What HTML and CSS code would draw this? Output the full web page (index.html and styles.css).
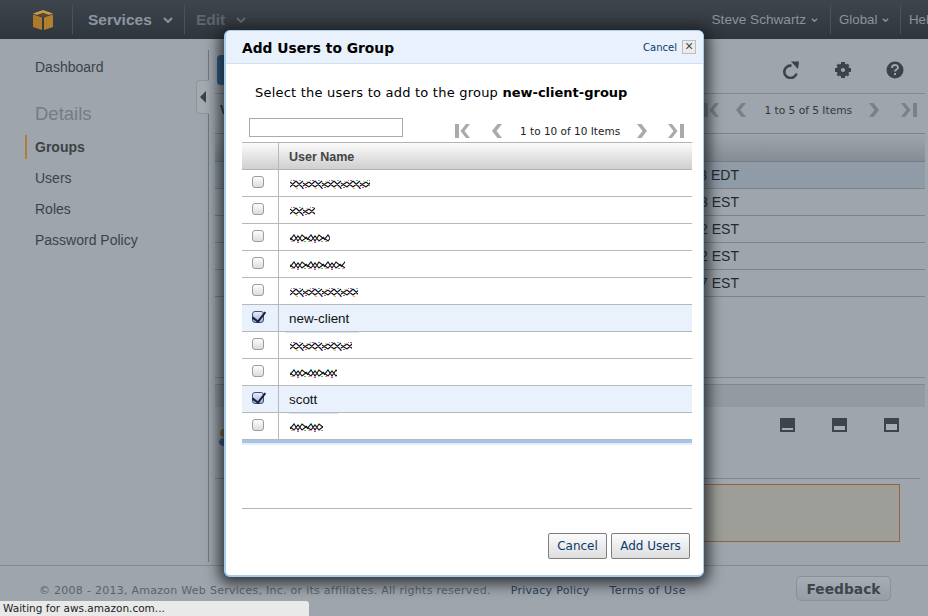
FILE: index.html
```html
<!DOCTYPE html>
<html lang="en">
<head>
<meta charset="utf-8">
<title>Add Users to Group</title>
<link rel="stylesheet" href="styles.css">
</head>
<body>
<svg class="defs" width="0" height="0" aria-hidden="true">
  <defs>
    <pattern id="scramble-a" width="19" height="10" patternUnits="userSpaceOnUse">
      <path d="M0 3l6 5M0 8l6-6M6 2l7 7M6 8l7-6M13 4l6 4M13 7l6-4" fill="none" stroke="#14141c" stroke-width="1.150"/>
      <rect x="3" y="1" width="2" height="1" fill="#e23fb0"/>
      <rect x="9" y="1" width="2" height="1" fill="#35c4e8"/>
      <rect x="6" y="9" width="2" height="1" fill="#e8c832"/>
      <rect x="15" y="8" width="2" height="1" fill="#e8503a"/>
      <rect x="1" y="1" width="1" height="1" fill="#4bc45a"/>
      <rect x="12" y="9" width="2" height="1" fill="#3c6ae0"/>
      <rect x="16" y="2" width="2" height="1" fill="#e8c890"/>
    </pattern>
    <pattern id="scramble-b" width="17" height="10" patternUnits="userSpaceOnUse">
      <path d="M0 5l4 3 4-5 4 5 5-4M0 7l4-5 4 6 4-6 5 4" fill="none" stroke="#14141c" stroke-width="1.150"/>
      <rect x="3" y="1" width="2" height="1" fill="#35c4e8"/>
      <rect x="7" y="9" width="2" height="1" fill="#e23fb0"/>
      <rect x="11" y="1" width="2" height="1" fill="#e8c832"/>
      <rect x="14" y="8" width="2" height="1" fill="#4bc45a"/>
      <rect x="1" y="8" width="2" height="1" fill="#e8a060"/>
    </pattern>
  </defs>
  <symbol id="dn" viewBox="0 0 10 6"><path d="M1 1l4 4 4-4" fill="none" stroke="currentColor" stroke-width="2"/></symbol>
  <symbol id="first" viewBox="0 0 16 14"><path d="M0 0h4v14H0zM11 0h4L9.500 7l5.500 7h-4L5.500 7z" fill="currentColor"/></symbol>
  <symbol id="prev" viewBox="0 0 11 14"><path d="M6.500 0H11L5.500 7l5.500 7H6.500L1 7z" fill="currentColor"/></symbol>
  <symbol id="next" viewBox="0 0 11 14"><path d="M0 0h4.500L10 7l-5.500 7H0l5.500-7z" fill="currentColor"/></symbol>
  <symbol id="last" viewBox="0 0 16 14"><path d="M0 0h4l5.500 7L4 14H0l5.500-7zM12 0h4v14h-4z" fill="currentColor"/></symbol>
</svg>
<div class="page">
  <header class="topbar">
    <div class="logo-cell">
      <svg class="cube" viewBox="0 0 20 20" width="20" height="20"><path d="M10 0l10 3.500-4 1.500-6-2-6 2-4-1.500z" fill="#c79a4e"/><path d="M4 5l6 2 6-2-6-2z" fill="#5d4a2b"/><path d="M0 4.500l9 3V20l-9-3z" fill="#ac7a2a"/><path d="M20 4.500l-9 3V20l9-3z" fill="#b27f2d"/></svg>
    </div>
    <div class="nav-cell nav-services"><span class="nav-main">Services</span><svg class="dn" width="10" height="6"><use href="#dn"/></svg></div>
    <div class="nav-cell nav-edit"><span class="nav-main nav-dim">Edit</span><svg class="dn dn-dim" width="10" height="6"><use href="#dn"/></svg></div>
    <div class="nav-right">
      <div class="user-cell cell-user"><span>Steve Schwartz</span><svg class="dn dn-small" width="7" height="4"><use href="#dn"/></svg></div>
      <div class="user-cell cell-global"><span>Global</span><svg class="dn dn-small" width="7" height="4"><use href="#dn"/></svg></div>
      <div class="user-cell cell-help"><span>Help</span></div>
    </div>
  </header>

  <div class="main">
    <nav class="sidebar">
      <a class="side-link">Dashboard</a>
      <div class="side-head">Details</div>
      <a class="side-link side-active">Groups</a>
      <a class="side-link">Users</a>
      <a class="side-link">Roles</a>
      <a class="side-link">Password Policy</a>
      <div class="collapse-tab"><span class="collapse-arrow"></span></div>
    </nav>
    <section class="content">
      <div class="toolbar">
        <span class="blue-btn"></span>
        <div class="tool-icons">
          <svg width="18" height="18" viewBox="0 0 18 18"><path d="M14.500 12.500A6.200 6.200 0 1 1 9.500 4.700" fill="none" stroke="#3c4249" stroke-width="2.600"/><path d="M9 0.500l8 0-1 7.500z" fill="#3c4249"/></svg>
          <svg width="16" height="16" viewBox="0 0 16 16"><circle cx="8" cy="8" r="4.300" fill="none" stroke="#3c4249" stroke-width="4.400"/><path d="M6 0h4v3H6zM6 13h4v3H6zM0 6h3v4H0zM13 6h3v4h-3zM1.500 3.500l2-2 2 2-2 2zM10.500 3.500l2-2 2 2-2 2zM1.500 12.500l2-2 2 2-2 2zM10.500 12.500l2-2 2 2-2 2z" fill="#3c4249"/></svg>
          <svg width="18" height="18" viewBox="0 0 18 18"><circle cx="9" cy="9" r="8.500" fill="#3c4249"/><path d="M6 7c0-4 6-4 6-.500 0 2-3 2-3 4" fill="none" stroke="#9ea5ac" stroke-width="2"/><rect x="8" y="12" width="2" height="2" fill="#9ea5ac"/></svg>
        </div>
      </div>
      <div class="pager-bar">
        <span class="letter-v">V</span>
        <svg class="pg" width="16" height="14"><use href="#first"/></svg>
        <svg class="pg pg-prev" width="11" height="14"><use href="#prev"/></svg>
        <span class="pg-text">1 to 5 of 5 Items</span>
        <svg class="pg pg-next" width="11" height="14"><use href="#next"/></svg>
        <svg class="pg pg-last" width="16" height="14"><use href="#last"/></svg>
      </div>
      <div class="bg-head"></div>
      <div class="bg-row bg-row-sel">3 EDT</div>
      <div class="bg-row">3 EST</div>
      <div class="bg-row">2 EST</div>
      <div class="bg-row">2 EST</div>
      <div class="bg-row">7 EST</div>
      <div class="split">
        <div class="band"></div>
        <div class="pane-icons">
          <svg class="pane-avatar" width="8" height="20" viewBox="0 0 8 20"><circle cx="5" cy="4" r="4" fill="#7a6a3c"/><ellipse cx="5" cy="13" rx="5" ry="4" fill="#2f5583"/></svg>
          <svg width="15" height="14" viewBox="0 0 15 14"><path d="M0 0h15v14H0z" fill="#3e444c"/><rect x="2" y="10" width="11" height="2" fill="#a7adb3"/></svg>
          <svg width="15" height="14" viewBox="0 0 15 14"><path d="M0 0h15v14H0z" fill="#3e444c"/><rect x="2" y="8" width="11" height="4" fill="#a7adb3"/></svg>
          <svg width="15" height="14" viewBox="0 0 15 14"><path d="M0 0h15v14H0z" fill="#3e444c"/><rect x="2" y="6" width="11" height="6" fill="#a7adb3"/></svg>
        </div>
        <div class="pane-rule"></div>
        <div class="warn-box"></div>
      </div>
    </section>
  </div>

  <footer class="footer">
    <span class="copy">© 2008 - 2013, Amazon Web Services, Inc. or its affiliates. All rights reserved.</span>
    <a class="foot-link foot-privacy">Privacy Policy</a>
    <a class="foot-link foot-terms">Terms of Use</a>
    <span class="feedback">Feedback</span>
  </footer>
</div>

<div class="status">Waiting for aws.amazon.com...</div>

<div class="modal" role="dialog">
  <div class="modal-head">
    <h2>Add Users to Group</h2>
    <a class="head-cancel">Cancel</a>
    <span class="close-x">×</span>
  </div>
  <p class="lead">Select the users to add to the group <b>new-client-group</b></p>
  <div class="picker">
    <input class="search" type="text" aria-label="Filter">
    <div class="pager">
      <svg class="mpg mpg-first" width="16" height="14"><use href="#first"/></svg>
      <svg class="mpg mpg-prev" width="11" height="14"><use href="#prev"/></svg>
      <span class="mpg-text">1 to 10 of 10 Items</span>
      <svg class="mpg mpg-next" width="11" height="14"><use href="#next"/></svg>
      <svg class="mpg mpg-last" width="16" height="14"><use href="#last"/></svg>
    </div>
  </div>
  <div class="table">
    <div class="tr th"><div class="c0"></div><div class="c1">User Name</div></div>
    <div class="tr"><div class="c0"><span class="cb"></span></div><div class="c1"><svg class="blur" width="80" height="10"><rect width="80" height="10" fill="url(#scramble-a)"/></svg></div></div>
    <div class="tr"><div class="c0"><span class="cb"></span></div><div class="c1"><svg class="blur" width="25" height="10"><rect width="25" height="10" fill="url(#scramble-a)"/></svg></div></div>
    <div class="tr"><div class="c0"><span class="cb"></span></div><div class="c1"><svg class="blur" width="40" height="10"><rect width="40" height="10" fill="url(#scramble-b)"/></svg></div></div>
    <div class="tr"><div class="c0"><span class="cb"></span></div><div class="c1"><svg class="blur" width="55" height="10"><rect width="55" height="10" fill="url(#scramble-b)"/></svg></div></div>
    <div class="tr"><div class="c0"><span class="cb"></span></div><div class="c1"><svg class="blur" width="68" height="10"><rect width="68" height="10" fill="url(#scramble-a)"/></svg></div></div>
    <div class="tr tr-sel"><div class="c0"><span class="cb cb-on"></span></div><div class="c1"><span class="name">new-client</span></div></div>
    <div class="tr"><div class="c0"><span class="cb"></span></div><div class="c1"><svg class="blur" width="62" height="10"><rect width="62" height="10" fill="url(#scramble-a)"/></svg></div></div>
    <div class="tr"><div class="c0"><span class="cb"></span></div><div class="c1"><svg class="blur" width="47" height="10"><rect width="47" height="10" fill="url(#scramble-b)"/></svg></div></div>
    <div class="tr tr-sel"><div class="c0"><span class="cb cb-on"></span></div><div class="c1"><span class="name name-short">scott</span></div></div>
    <div class="tr"><div class="c0"><span class="cb"></span></div><div class="c1"><svg class="blur" width="33" height="10"><rect width="33" height="10" fill="url(#scramble-b)"/></svg></div></div>
    <div class="table-end"></div>
  </div>
  <div class="modal-foot">
    <button class="btn btn-cancel" type="button">Cancel</button>
    <button class="btn btn-add" type="button">Add Users</button>
  </div>
</div>
</body>
</html>
```
FILE: styles.css
```css
* { box-sizing: border-box; }
html, body { margin: 0; height: 100%; }
body {
  width: 928px; height: 616px; overflow: hidden; position: relative;
  background: #9ea5ac; font-family: "Liberation Sans", Arial, sans-serif; color: #23272b;
}
.defs { position: absolute; }
.page { height: 616px; display: flex; flex-direction: column; }

.topbar {
  height: 39px; flex: none; display: flex; align-items: center; color: #8b939c;
  background: linear-gradient(#3f454d, #343a41 70%, #30353b);
}
.logo-cell { width: 73px; height: 29px; padding-left: 33px; border-right: 1px solid #4c5259; display: flex; align-items: center; }
.cube { display: block; }
.nav-cell { display: flex; align-items: center; height: 29px; }
.nav-services { width: 112px; padding-left: 15px; border-right: 1px solid #4c5259; }
.nav-edit { padding-left: 11px; }
.nav-main { font-weight: 700; font-size: 15.500px; color: #8d96a0; }
.nav-dim { color: #5f666e; }
.dn { color: #8b939c; }
.nav-services .dn { margin-left: 11px; }
.nav-edit .dn { margin-left: 11px; }
.dn-dim { color: #666d75; }
.dn-small { margin-left: 5px; }
.nav-right { margin-left: auto; display: flex; align-items: center; font-size: 13.300px; }
.user-cell { display: flex; align-items: center; height: 29px; white-space: nowrap; }
.cell-user { font-size: 13.600px; }
.cell-global { margin-left: 12px; padding-left: 8px; border-left: 1px solid #4c5259; width: 70px; }
.cell-help { padding-left: 8px; border-left: 1px solid #4c5259; width: 28px; overflow: hidden; }

.main { flex: none; height: 526px; display: flex; }
.sidebar {
  position: relative; width: 209px; height: 512px; margin-top: 11px; flex: none;
  border-right: 1px solid #71777d; padding-top: 1px;
  display: flex; flex-direction: column;
}
.side-link { display: flex; align-items: center; height: 31px; padding-left: 35px; font-size: 14px; color: #3d4248; }
.side-head { font-size: 18.500px; color: #757c83; padding-left: 35px; margin-top: 20px; margin-bottom: 5px; height: 24px; line-height: 24px; }
.side-active { font-weight: 700; margin-left: 25px; padding-left: 8px; height: 24px; border-left: 2px solid #b57a35; margin-bottom: 3px; margin-top: 4px; }
.collapse-tab {
  position: absolute; left: 196px; top: 30px; width: 13px; height: 34px;
  background: #a3aab0; border: 1px solid #8f959c; border-right: 0; border-radius: 4px 0 0 4px;
  display: flex; align-items: center; justify-content: center;
}
.collapse-arrow { width: 0; height: 0; border: 6px solid transparent; border-left: 0; border-right: 6px solid #3c4249; }

.content { width: 710px; margin-left: 6px; flex: none; display: flex; flex-direction: column; }
.toolbar { height: 55px; display: flex; padding-top: 16px; border-bottom: 1px solid #81878d; }
.blue-btn { width: 30px; height: 30px; background: #2b5b86; border-radius: 4px 0 0 4px; margin-left: 2px; }
.tool-icons { margin-left: auto; margin-right: 21px; margin-top: 5px; display: flex; gap: 35px; align-items: center; height: 20px; }
.pager-bar { height: 40px; padding-bottom: 8px; display: flex; align-items: center; border-bottom: 1px solid #7d8389; color: #7b8188; }
.letter-v { font-size: 12px; font-weight: 700; color: #25292d; margin-left: 5px; margin-right: auto; }
.pg { flex: none; }
.pg-prev { margin-left: 15px; margin-right: 18px; }
.pg-text { font-family: "DejaVu Sans", Verdana, sans-serif; font-size: 10.600px; color: #32373c; white-space: nowrap; }
.pg-next { margin-left: 17px; }
.pg-last { margin-left: 21px; margin-right: 8px; }
.bg-head { height: 28px; flex: none; background: linear-gradient(#9ea5ac, #868c93); border-bottom: 1px solid #777d83; }
.bg-row {
  height: 27px; flex: none; display: flex; align-items: center; justify-content: flex-end;
  padding-right: 186px; font-size: 14px; color: #25292d; border-bottom: 1px solid #7d8389;
}
.bg-row-sel { background: #8f9ba7; }
.split { margin-top: 80px; border-top: 1px solid #81878d; padding-top: 6px; }
.band { height: 23px; border-top: 1px solid #81878d; background: #939aa1; }
.pane-icons { display: flex; align-items: flex-start; justify-content: flex-end; gap: 37px; padding-right: 26px; margin-top: 11px; height: 14px; }
.pane-avatar { margin-right: auto; margin-left: 4px; margin-top: 11px; }
.pane-rule { margin-top: 46px; border-top: 1px solid #81878d; margin-right: 5px; }
.warn-box { margin-top: 5px; margin-right: 25px; margin-left: 100px; height: 58px; background: #9d9e97; border: 1px solid #96613f; }

.footer {
  flex: none; height: 51px; border-top: 1px solid #858b91; display: flex; align-items: flex-start;
  font-family: "DejaVu Sans", Verdana, sans-serif; font-size: 11px;
}
.copy { margin-left: 39px; margin-top: 18px; color: #5c6268; white-space: nowrap; letter-spacing: .27px; }
.foot-link { margin-top: 18px; color: #2c3f5c; white-space: nowrap; letter-spacing: .27px; }
.foot-privacy { margin-left: 20px; }
.foot-terms { margin-left: 20px; letter-spacing: .5px; }
.feedback {
  position: absolute; left: 796px; top: 576px; width: 95px; height: 25px; display: flex; align-items: center; justify-content: center;
  font-size: 13.800px; font-weight: 700; color: #3f454c; background: linear-gradient(#a6adb4, #969da4);
  border: 1px solid #8a9097; border-radius: 5px;
}
.status {
  position: absolute; left: 0; top: 601px; width: 309px; height: 15px; background: #e9e9e9;
  border-top-right-radius: 3px; padding-left: 3px; font-family: "DejaVu Sans", Verdana, sans-serif; font-size: 10.500px; line-height: 15px; color: #222;
}

.modal {
  position: absolute; left: 224px; top: 30px; width: 480px; height: 547px;
  background: #fff; border: 1px solid #a6cdec; border-left-width: 2px; border-bottom-width: 2px; border-radius: 6px;
  box-shadow: 0 2px 14px 5px rgba(20, 24, 28, .78);
  display: flex; flex-direction: column;
}
.modal-head {
  height: 33px; flex: none; display: flex; align-items: center; background: #e8f1fc; border-bottom: 1px solid #cfe2f5;
  border-radius: 5px 5px 0 0; padding-left: 16px; padding-right: 7px;
}
.modal-head h2 { margin: 1px 0 0; font-family: "DejaVu Sans", Verdana, sans-serif; font-size: 13.800px; font-weight: 700; color: #000; flex: 1; }
.head-cancel { font-family: "DejaVu Sans", Verdana, sans-serif; font-size: 10px; color: #0c3a6b; }
.close-x {
  width: 14px; height: 14px; margin-left: 5px; border: 1px solid #bdbdbd; background: #ececec;
  font-size: 14px; line-height: 11px; text-align: center; color: #444; font-family: "Liberation Sans", sans-serif;
}
.lead { margin: 20px 0 0 29px; height: 17px; font-family: "DejaVu Sans", Verdana, sans-serif; font-size: 13px; line-height: 17px; letter-spacing: .22px; color: #000; white-space: nowrap; }
.lead b { letter-spacing: 0; }
.picker { margin: 17px 12px 0 23px; height: 24px; display: flex; align-items: flex-start; }
.search { width: 154px; height: 19px; border: 1px solid #aaa; padding: 0; background: #fff; flex: none; }
.pager { display: flex; align-items: center; height: 17px; margin-top: 4px; margin-left: 52px; color: #aaa; }
.mpg { flex: none; display: block; }
.mpg-prev { margin-left: 20px; }
.mpg-text { margin-left: 18px; font-family: "DejaVu Sans", Verdana, sans-serif; font-size: 10.500px; color: #222; white-space: nowrap; }
.mpg-next { margin-left: 17px; }
.mpg-last { margin-left: 20px; }
.table { margin: 0 11px 0 16px; flex: none; height: 366px; }
.tr { height: 27px; display: flex; border-bottom: 1px solid #b8b8b8; }
.th { height: 28px; background: linear-gradient(#fbfbfb, #cfcfcf); border-top: 1px solid #b4b4b4; border-bottom-color: #b4b4b4; font-weight: 700; }
.th .c1 { color: #444; font-size: 12.500px; padding-top: 2px; }
.tr-sel { background: #e8f1fc; }
.c0 { width: 37px; flex: none; border-right: 1px solid #b8b8b8; display: flex; align-items: center; justify-content: center; padding-right: 5px; }
.c1 { flex: 1; display: flex; align-items: center; padding-left: 10px; font-size: 13.400px; color: #111; }
.cb { width: 12px; height: 12px; margin-top: -3px; border: 1px solid #9c9c9c; border-radius: 3px; background: linear-gradient(#fdfdfd, #dcdcdc); position: relative; }
.cb-on { border-color: #3c4f80; background: linear-gradient(#e8ecf6, #a6b4da); }
.cb-on::after { content: ""; position: absolute; left: 2px; top: -3px; width: 6px; height: 11px; border: solid #15203f; border-width: 0 2px 2px 0; transform: rotate(38deg); }
.blur { display: block; margin-left: 1px; margin-top: 1px; }
.name { position: relative; }
.name::after { content: ""; position: absolute; left: -4px; right: -10px; top: 21px; height: 1px; background: #d6e6f6; }
.name-short::after { left: 0; right: -21px; }
.table-end { height: 5px; background: linear-gradient(#a6c4e8 60%, #e4eefa 60%); }
.modal-foot { width: 450px; margin-left: 16px; border-top: 1px solid #b4b4b4; padding: 24px 2px 0 0; display: flex; justify-content: flex-end; gap: 4px; }
.btn {
  height: 26px; border: 1px solid #7e7e7e; border-radius: 2px; background: linear-gradient(#fbfbfb, #dedede);
  font-family: "DejaVu Sans", Verdana, sans-serif; font-size: 12px; color: #0c3a6b; padding: 0;
}
.btn-cancel { width: 59px; }
.btn-add { width: 79px; }
```
